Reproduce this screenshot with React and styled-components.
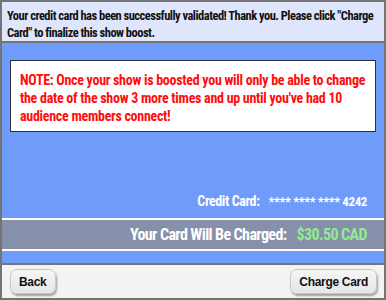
import React from 'react'
import styled, { createGlobalStyle } from 'styled-components'

const condensed = `"Roboto Condensed", "Liberation Sans Narrow", "DejaVu Sans Condensed", sans-serif`

const GlobalStyle = createGlobalStyle`
  html, body {
    margin: 0;
    padding: 0;
    background: #ffffff;
  }
`

const App = () =>
  <>
    <GlobalStyle/>
    <Frame>
      <Header>
        Your credit card has been successfully validated! Thank you. Please click "Charge Card" to finalize this show boost.
      </Header>
      <Body>
        <NoteBox>
          NOTE: Once your show is boosted you will only be able to change the date of the show 3 more times and up until you've had 10 audience members connect!
        </NoteBox>
        <CardRow>
          <Label>Credit Card:</Label>
          <Value>**** **** **** 4242</Value>
        </CardRow>
        <ChargeBar>
          <Label>Your Card Will Be Charged:</Label>
          <Amount>$30.50 CAD</Amount>
        </ChargeBar>
        <BottomStrip/>
      </Body>
      <Footer>
        <Button>Back</Button>
        <Button>Charge Card</Button>
      </Footer>
    </Frame>
  </>

const Frame = styled.div`
  width: 386px;
  height: 300px;
  box-sizing: border-box;
  border: 2px solid #747474;
  display: flex;
  flex-direction: column;
  font-family: ${condensed};
`

const Header = styled.div`
  background-color: #dfe5fb;
  border-bottom: 2px solid #747474;
  padding: 5px 1px 3px 5px;
  height: 41px;
  box-sizing: border-box;
  font-size: 12.5px;
  letter-spacing: -0.52px;
  line-height: 17px;
  font-weight: bold;
  color: #111;
  flex-shrink: 0;
`

const Body = styled.div`
  flex: 1;
  background-color: #6f9bfb;
  display: flex;
  flex-direction: column;
  padding-top: 17px;
`

const NoteBox = styled.div`
  margin: 0 8px;
  background-color: #ffffff;
  border: 1px solid #2a2f3a;
  padding: 10px 9px 10px 9px;
  height: 72px;
  box-sizing: border-box;
  color: #ff0d0d;
  font-size: 14px;
  letter-spacing: -0.28px;
  line-height: 18px;
  font-weight: bold;
`

const CardRow = styled.div`
  display: flex;
  justify-content: flex-end;
  align-items: center;
  gap: 9px;
  margin-top: auto;
  padding: 0 17px 9px 0;
  color: #ffffff;
  font-size: 14px;
  letter-spacing: -0.4px;
  font-weight: bold;
`

const Label = styled.span`
  color: #ffffff;
`

const Value = styled.span`
  font-size: 13px;
`

const ChargeBar = styled.div`
  display: flex;
  justify-content: flex-end;
  align-items: center;
  gap: 10px;
  height: 29px;
  background-color: #8790aa;
  border-top: 2px solid #ffffff;
  border-bottom: 2px solid #ffffff;
  padding-right: 17px;
  font-size: 16px;
  letter-spacing: -0.6px;
  font-weight: bold;
`

const Amount = styled.span`
  color: #8fec8f;
`

const BottomStrip = styled.div`
  height: 12px;
  border-bottom: 2px solid #747474;
`

const Footer = styled.div`
  flex-shrink: 0;
  height: 33px;
  background-color: #f3f3f3;
  display: flex;
  justify-content: space-between;
  align-items: center;
  padding: 0 7px 0 8px;
`

const Button = styled.button`
  font-family: "Liberation Sans", Arial, sans-serif;
  font-weight: bold;
  font-size: 12px;
  letter-spacing: -0.3px;
  color: #111;
  height: 25px;
  padding: 0 8px;
  border: 1px solid #c8c8c8;
  border-radius: 7px;
  background: linear-gradient(#f6f6f6, #e6e6e6);
  box-shadow: 1px 2px 2px rgba(0, 0, 0, 0.35);
`

export default App
